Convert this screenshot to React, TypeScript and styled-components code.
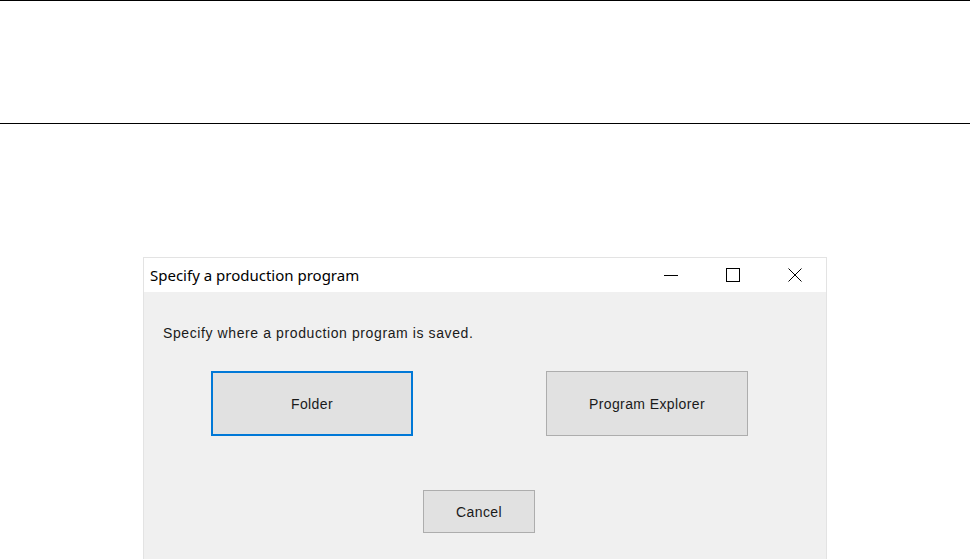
import React from "react";
import styled, { createGlobalStyle } from "styled-components";

const GlobalStyle = createGlobalStyle`
  html, body {
    margin: 0;
    padding: 0;
    background: #ffffff;
    overflow: hidden;
  }
  body {
    width: 970px;
    height: 559px;
  }
`;

const Page = styled.div`
  width: 970px;
  height: 559px;
  overflow: hidden;
  background: #ffffff;
`;

const HeaderBand = styled.div`
  height: 122px;
  border-top: 1px solid #000000;
  border-bottom: 1px solid #000000;
`;

const Stage = styled.div`
  padding: 133px 0 0 143px;
`;

const DialogWindow = styled.div`
  width: 682px;
  height: 320px;
  border: 1px solid #e3e3e3;
  background: #f0f0f0;
  display: flex;
  flex-direction: column;
`;

const TitleBar = styled.div`
  height: 34px;
  background: #ffffff;
  display: flex;
  align-items: center;
  padding-left: 6px;
`;

const Title = styled.div`
  flex: 1;
  font-family: "Noto Sans", "Open Sans", sans-serif;
  font-size: 15px;
  color: #000000;
  padding-bottom: 1px;
`;

const Controls = styled.div`
  display: flex;
  height: 100%;
`;

const ControlButton = styled.div`
  width: 62px;
  height: 100%;
  display: flex;
  align-items: center;
  justify-content: center;
  svg {
    display: block;
  }
`;

const Body = styled.div`
  padding: 33px 0 0 19px;
  display: flex;
  flex-direction: column;
`;

const Message = styled.div`
  font-family: "Liberation Sans", Arial, sans-serif;
  font-size: 14px;
  letter-spacing: 0.6px;
  color: #1a1a1a;
  height: 16px;
  line-height: 16px;
`;

const ChoiceRow = styled.div`
  display: flex;
  gap: 133px;
  margin-top: 30px;
  padding-left: 48px;
`;

const DialogButton = styled.div<{ $focused?: boolean; $w: number; $h: number }>`
  box-sizing: border-box;
  width: ${(p) => p.$w}px;
  height: ${(p) => p.$h}px;
  background: #e1e1e1;
  border: ${(p) => (p.$focused ? "2px solid #0078d7" : "1px solid #adadad")};
  display: flex;
  align-items: center;
  justify-content: center;
  font-family: "Liberation Sans", Arial, sans-serif;
  font-size: 14px;
  letter-spacing: 0.4px;
  color: #1a1a1a;
`;

const CancelRow = styled.div`
  display: flex;
  margin-top: 54px;
  padding-left: 260px;
`;

const App: React.FC = () => {
  return (
    <Page>
      <GlobalStyle />
      <HeaderBand />
      <Stage>
        <DialogWindow>
          <TitleBar>
            <Title>Specify a production program</Title>
            <Controls>
              <ControlButton>
                <svg width="14" height="14" viewBox="0 0 14 14">
                  <line x1="0" y1="7.5" x2="14" y2="7.5" stroke="#000" strokeWidth="1" />
                </svg>
              </ControlButton>
              <ControlButton>
                <svg width="14" height="14" viewBox="0 0 14 14">
                  <rect x="0.5" y="0.5" width="13" height="13" fill="none" stroke="#000" strokeWidth="1" />
                </svg>
              </ControlButton>
              <ControlButton>
                <svg width="14" height="14" viewBox="0 0 14 14">
                  <path d="M0.5 0.5 L13.5 13.5 M13.5 0.5 L0.5 13.5" stroke="#000" strokeWidth="1" fill="none" />
                </svg>
              </ControlButton>
            </Controls>
          </TitleBar>
          <Body>
            <Message>Specify where a production program is saved.</Message>
            <ChoiceRow>
              <DialogButton $focused $w={202} $h={65}>
                Folder
              </DialogButton>
              <DialogButton $w={202} $h={65}>
                Program Explorer
              </DialogButton>
            </ChoiceRow>
            <CancelRow>
              <DialogButton $w={112} $h={43}>
                Cancel
              </DialogButton>
            </CancelRow>
          </Body>
        </DialogWindow>
      </Stage>
    </Page>
  );
};

export default App;
